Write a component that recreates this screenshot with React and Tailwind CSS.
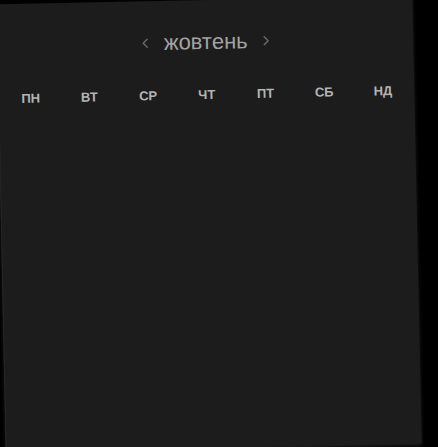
import React from "react";

const days = ["пн", "вт", "ср", "чт", "пт", "сб", "нд"];

const Chevron = ({ dir }) => (
  <svg width="8" height="10" viewBox="0 0 8 10" fill="none" className="text-[#6a6a6a]">
    <path
      d={dir === "left" ? "M6 1 L2 5 L6 9" : "M2 1 L6 5 L2 9"}
      stroke="currentColor"
      strokeWidth="1.4"
      strokeLinecap="round"
      strokeLinejoin="round"
    />
  </svg>
);

export default function App() {
  return (
    <div className="w-[438px] h-[447px] overflow-hidden bg-black" style={{ fontFamily: '"Liberation Sans", Arial, sans-serif' }}>
      <div className="ml-[1px] w-[416px] h-[448px] bg-[#1c1c1c] border-l border-[#262626] shadow-[0_2px_4px_rgba(60,60,60,0.5)] rotate-[-1.2deg] origin-center">
        <div className="flex items-center justify-center gap-[15px] pt-[26px] h-[58px]">
          <Chevron dir="left" />
          <span className="text-[22px] text-[#a3a3a3] leading-none">жовтень</span>
          <Chevron dir="right" />
        </div>
        <div className="grid grid-cols-7 px-[2px] mt-[30px]">
          {days.map((d) => (
            <div key={d} className="text-center text-[13px] font-bold uppercase text-[#b4b4b4] leading-none">
              {d}
            </div>
          ))}
        </div>
      </div>
    </div>
  );
}
